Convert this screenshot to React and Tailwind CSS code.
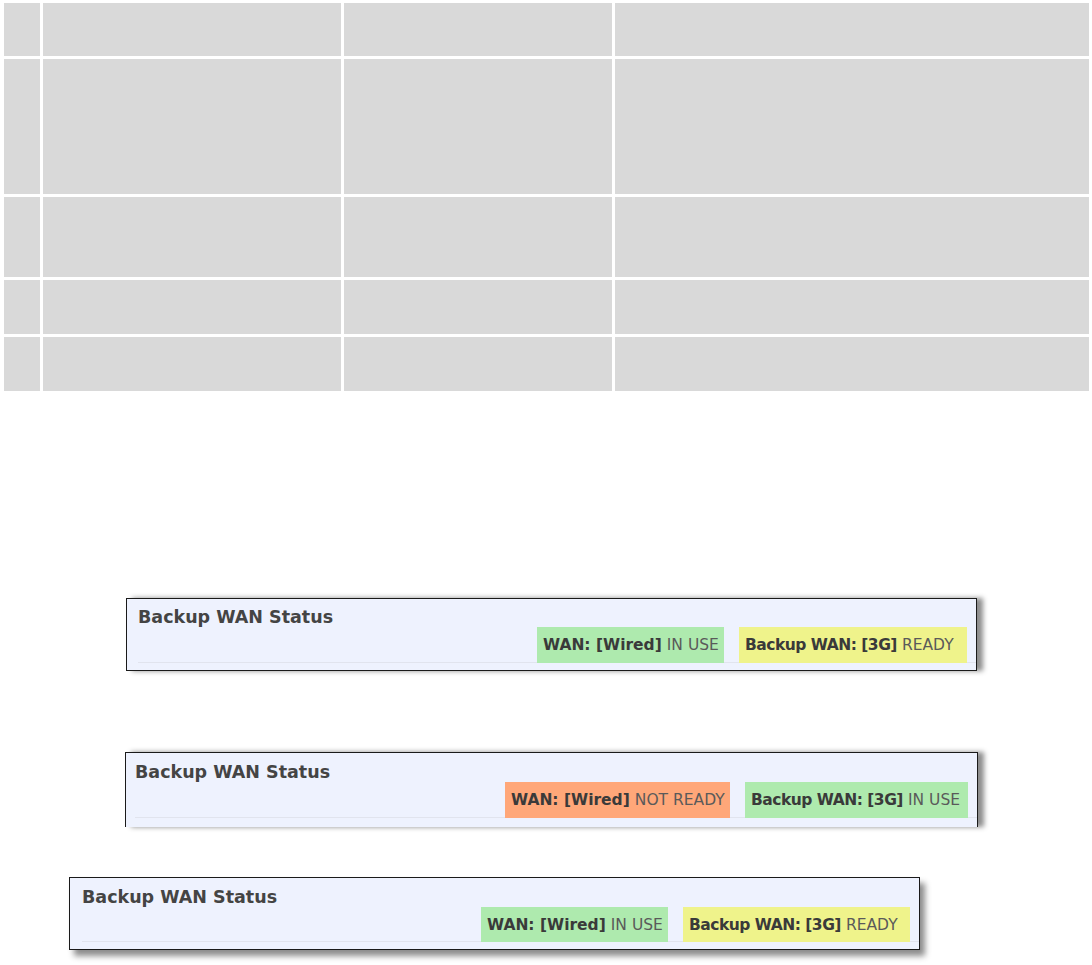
const rows = [53, 135, 80, 54, 54]

const panels = [
  {
    key: 'p1',
    box: 'ml-[126px] mt-[207px] w-[851px] border border-[#1a1a1a] shadow-[6px_0_5px_rgba(0,0,0,0.45)]',
    pt: 'pt-[8px] pl-[11px]',
    pb: 'pb-[7px]',
    h: 'h-[36px]',
    badges: [
      { bold: 'WAN: [Wired]', text: 'IN USE', bg: 'bg-[#aeeaae]', w: 'w-[187px]' },
      { bold: 'Backup WAN: [3G]', text: 'READY', bg: 'bg-[#eff38b]', w: 'w-[228px]', tight: true },
    ],
  },
  {
    key: 'p2',
    box: 'ml-[125px] mt-[81px] w-[853px] h-[75px] border-t border-l border-r border-[#1a1a1a] shadow-[6px_0_5px_rgba(0,0,0,0.45)]',
    pt: 'pt-[9px] pl-[9px]',
    pb: '',
    h: 'h-[36px]',
    badges: [
      { bold: 'WAN: [Wired]', text: 'NOT READY', bg: 'bg-[#ffa779]', w: 'w-[225px]' },
      { bold: 'Backup WAN: [3G]', text: 'IN USE', bg: 'bg-[#aeeaae]', w: 'w-[223px]', tight: true },
    ],
  },
  {
    key: 'p3',
    box: 'ml-[69px] mt-[50px] w-[851px] border border-[#1a1a1a] shadow-[5px_6px_6px_rgba(0,0,0,0.45)]',
    pt: 'pt-[9px] pl-[12px]',
    pb: 'pb-[7px]',
    h: 'h-[35px]',
    badges: [
      { bold: 'WAN: [Wired]', text: 'IN USE', bg: 'bg-[#aeeaae]', w: 'w-[187px]' },
      { bold: 'Backup WAN: [3G]', text: 'READY', bg: 'bg-[#eff38b]', w: 'w-[227px]', tight: true },
    ],
  },
]

function Panel({ p }) {
  return (
    <div className={`${p.box} bg-[#eef2fe] ${p.pb}`}>
      <div className={p.pt}>
        <div className="text-[17.5px] leading-[20px] font-bold text-[#444] whitespace-nowrap" style={{ fontFamily: '"DejaVu Sans", Verdana, sans-serif' }}>
          Backup WAN Status
        </div>
        <div className="flex justify-end gap-[15px] pr-[9px] border-b border-[#e1e4ee]">
          {p.badges.map((b, i) => (
            <div key={i} className={`${b.bg} ${b.w} ${p.h} -mb-px flex items-center pl-[6px] pt-[2px] whitespace-nowrap text-[15.5px]`} style={{ fontFamily: '"DejaVu Sans", Verdana, sans-serif' }}>
              <span className={b.tight ? 'font-bold text-[#3a3a3a] tracking-[-0.5px]' : 'font-bold text-[#3a3a3a]'}>{b.bold}</span>
              <span className="ml-[5px] text-[#5a5a5a]">{b.text}</span>
            </div>
          ))}
        </div>
      </div>
    </div>
  )
}

export default function App() {
  return (
    <div className="w-[1092px] h-[965px] bg-white overflow-hidden">
      <div className="pt-[3px] pl-[4px]">
        <div className="grid grid-cols-[36px_298px_268px_474px] gap-[3px] w-max">
          {rows.map((h, r) =>
            [0, 1, 2, 3].map(c => (
              <div key={r + '-' + c} className="bg-[#d9d9d9]" style={{ height: h }} />
            ))
          )}
        </div>
      </div>
      {panels.map(p => <Panel key={p.key} p={p} />)}
    </div>
  )
}
